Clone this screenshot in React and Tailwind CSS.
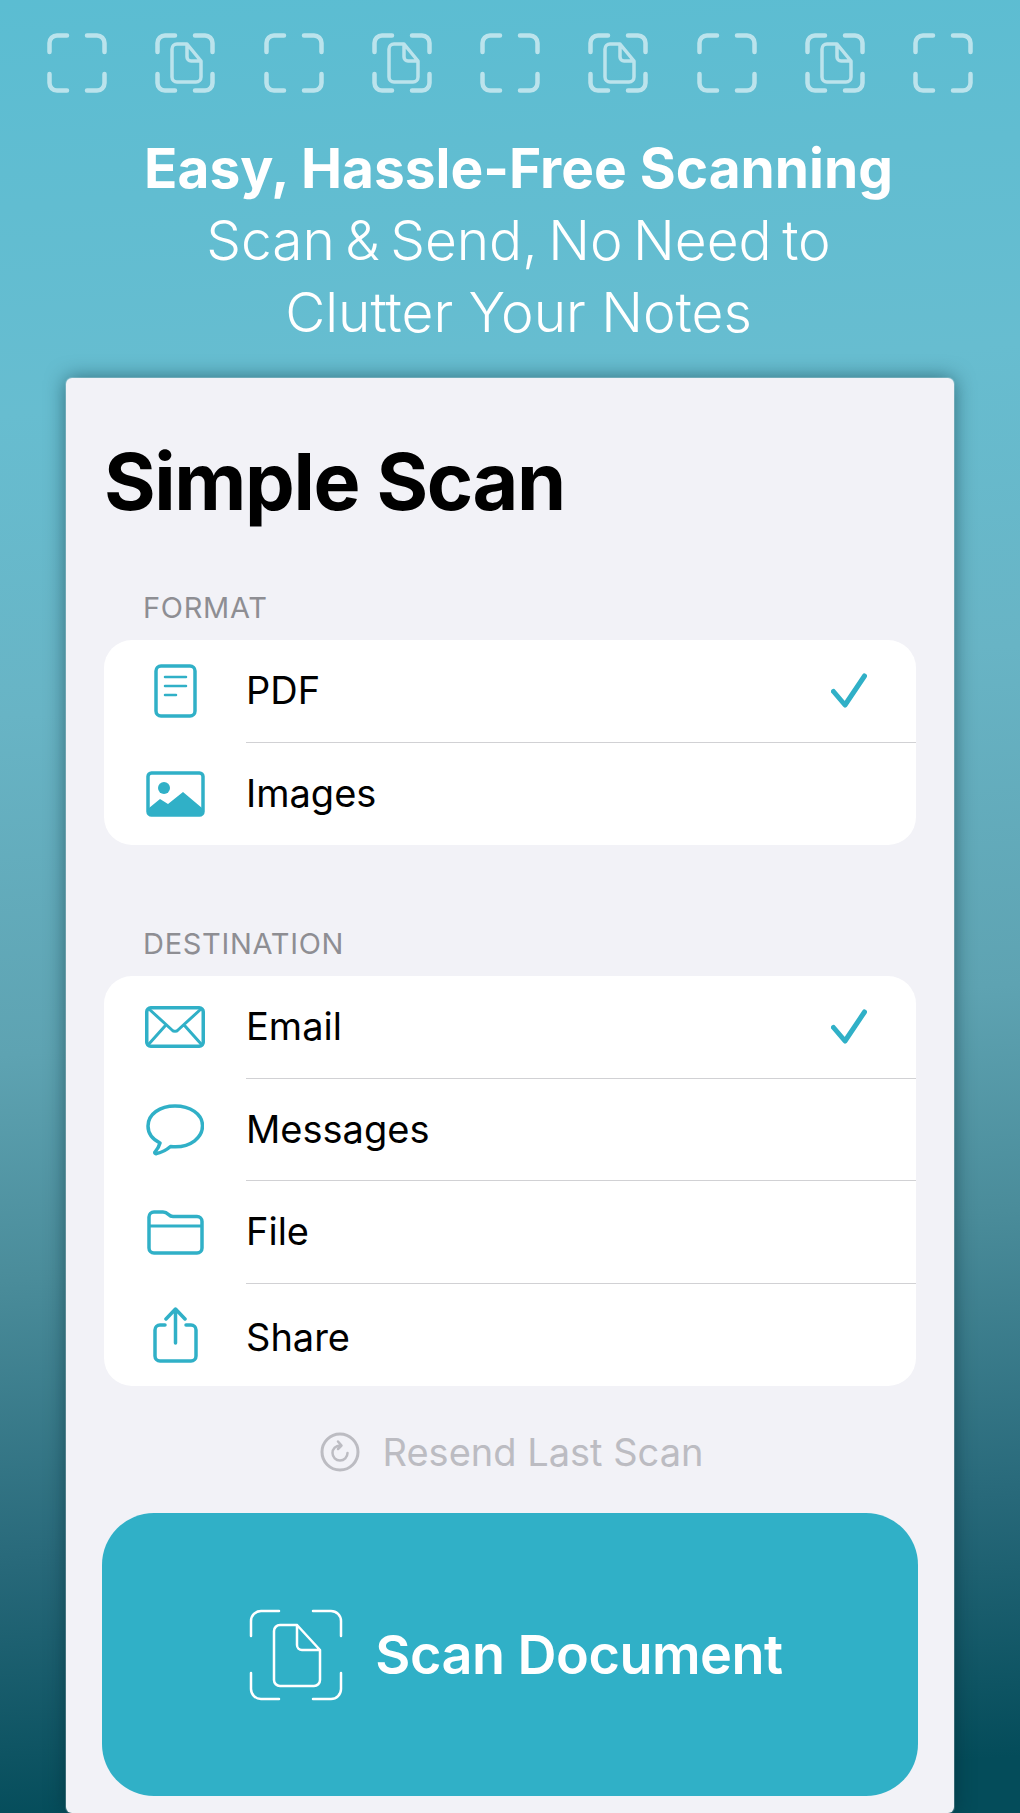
const teal = '#30b0c7'

function Frame({ file }) {
  return (
    <svg width="60" height="60" viewBox="0 0 60 60" fill="none" stroke="#fff" strokeOpacity="0.58" strokeWidth="4.500" strokeLinecap="round" strokeLinejoin="round">
      <path d="M2.500 19V10A7.500 7.500 0 0 1 10 2.500h10M40 2.500h10A7.500 7.500 0 0 1 57.500 10v9M2.500 41v9a7.500 7.500 0 0 0 7.500 7.500h10M40 57.500h10a7.500 7.500 0 0 0 7.500-7.500v-9" />
      {file && (
        <path d="M17 16a5 5 0 0 1 5-5h10l14 17v16a5 5 0 0 1-5 5H22a5 5 0 0 1-5-5zM32 11v13a4 4 0 0 0 4 4h10" strokeWidth="3.500" />
      )}
    </svg>
  )
}

function PdfIcon() {
  return (
    <svg width="43" height="54" viewBox="0 0 43 54" fill="none" stroke={teal} strokeWidth="3.500" strokeLinecap="round">
      <rect x="2" y="2" width="39" height="50" rx="5" />
      <path d="M11 13h21M11 22h21M11 31h11" strokeWidth="2.500" />
    </svg>
  )
}

function ImagesIcon() {
  return (
    <svg width="59" height="46" viewBox="0 0 59 46" fill="none">
      <rect x="2" y="2" width="55" height="42" rx="3.500" stroke={teal} strokeWidth="3.500" />
      <circle cx="18" cy="17" r="6" fill={teal} />
      <path d="M3 37l11-9 8 5 15-12 19 16v4a3 3 0 0 1-3 3H6a3 3 0 0 1-3-3z" fill={teal} />
    </svg>
  )
}

function MailIcon() {
  return (
    <svg width="60" height="42" viewBox="0 0 60 42" fill="none" stroke={teal} strokeWidth="3.500" strokeLinecap="round" strokeLinejoin="round">
      <rect x="1.750" y="1.750" width="56.500" height="38.500" rx="4" />
      <path d="M4 3l23 21a4 4 0 0 0 6 0L56 3M3 39l17-19M57 39L40 20" strokeWidth="3" />
    </svg>
  )
}

function BubbleIcon() {
  return (
    <svg width="58" height="52" viewBox="0 0 58 52" fill="none" stroke={teal} strokeWidth="3.500" strokeLinejoin="round">
      <path d="M29 2C14 2 2 10 2 22c0 7 4 13 12 17-1 4-2.500 6-5 9-.5.8 0 2 1.500 1.500 5-1 10-3.500 14-7 2 .2 3 .3 5 .3 15 0 27-9 27-21S44 2 29 2z" />
    </svg>
  )
}

function FolderIcon() {
  return (
    <svg width="57" height="45" viewBox="0 0 57 45" fill="none" stroke={teal} strokeWidth="3.500" strokeLinejoin="round">
      <path d="M2 7a5 5 0 0 1 5-5h9c3 0 4 1 5.500 2.500C23 6 24 6.500 26 6.500h24a5 5 0 0 1 5 5V38a5 5 0 0 1-5 5H7a5 5 0 0 1-5-5z" />
      <path d="M2 16h53" strokeWidth="3" />
    </svg>
  )
}

function ShareIcon() {
  return (
    <svg width="45" height="56" viewBox="0 0 45 56" fill="none" stroke={teal} strokeWidth="3.500" strokeLinecap="round" strokeLinejoin="round">
      <path d="M12 18H7a5 5 0 0 0-5 5v26a5 5 0 0 0 5 5h31a5 5 0 0 0 5-5V23a5 5 0 0 0-5-5h-5" />
      <path d="M22.500 36V3M13 12l9.500-10L32 12" />
    </svg>
  )
}

function Check() {
  return (
    <svg width="36" height="36" viewBox="0 0 36 36" fill="none" stroke={teal} strokeWidth="5" strokeLinecap="round" strokeLinejoin="round">
      <path d="M2.500 18.500L14 32 33.500 3" />
    </svg>
  )
}

function ResendIcon() {
  return (
    <svg width="40" height="40" viewBox="0 0 40 40" fill="none" stroke="#bcbcc2" strokeLinecap="round" strokeLinejoin="round">
      <circle cx="20" cy="20" r="18" strokeWidth="3" />
      <path d="M20 13.500a7.500 7.500 0 1 0 7.500 7.500M18 9.500l3.500 4-3.500 3.500" strokeWidth="2.500" />
    </svg>
  )
}

function ScanIcon() {
  return (
    <svg width="94" height="92" viewBox="0 0 94 92" fill="none" stroke="#fff" strokeWidth="2.500" strokeLinecap="round" strokeLinejoin="round">
      <path d="M2 27V12A10 10 0 0 1 12 2h18M64 2h18a10 10 0 0 1 10 10v15M2 64v16a10 10 0 0 0 10 10h18M64 90h18a10 10 0 0 0 10-10V64" />
      <path d="M25 22a6 6 0 0 1 6-6h17l23 25v30a6 6 0 0 1-6 6H31a6 6 0 0 1-6-6zM48 16v20a5 5 0 0 0 5 5h18" />
    </svg>
  )
}

function Row({ icon, label, checked, last }) {
  return (
    <div className="flex h-[102.5px] items-center">
      <div className="flex w-[142px] shrink-0 justify-center">{icon}</div>
      <div className={`flex h-full flex-1 items-center justify-between pr-[49px] ${last ? '' : 'border-b border-[#d1d1d4]'}`}>
        <span className={`text-[38px] text-black ${label === 'Share' ? 'pt-[6px]' : ''}`}>{label}</span>
        {checked && <Check />}
      </div>
    </div>
  )
}

function Section({ title, children }) {
  return (
    <div>
      <div className="pl-[39px] text-[29px] leading-[32px] tracking-[0.7px] text-[#8e8e93]">{title}</div>
      <div className="mt-[16px] overflow-hidden rounded-[28px] bg-white">{children}</div>
    </div>
  )
}

export default function App() {
  return (
    <div
      className="flex h-[1813px] w-[1020px] flex-col overflow-hidden bg-[linear-gradient(176deg,#5bbdd2_0%,#67bdd0_22%,#68b4c5_38%,#5ea3b2_56%,#4a8c9a_68%,#28697a_83%,#044c5a_97%)] pt-[33px]"
      style={{ fontFamily: 'Inter, "Liberation Sans", sans-serif' }}
    >
      <div className="flex justify-between px-[47px]">
        {[0, 1, 2, 3, 4, 5, 6, 7, 8].map((i) => (
          <Frame key={i} file={i % 2 === 1} />
        ))}
      </div>

      <div className="mt-[39px] pl-[17px] text-center text-[55px] leading-[72px] text-white">
        <div className="font-bold">Easy, Hassle-Free Scanning</div>
        <div className="font-light [word-spacing:-5px]">Scan &amp; Send, No Need to</div>
        <div className="font-light">Clutter Your Notes</div>
      </div>

      <div className="mx-[66px] mt-[30px] flex-1 rounded-[6px] bg-[#f2f2f7] px-[38px] shadow-[0_0_0_1px_rgba(255,255,255,0.2),0_0_20px_rgba(0,40,50,0.55)]">
        <h1 className="mt-[58px] text-[79px] leading-[90px] font-bold tracking-[-1.4px] text-black">Simple Scan</h1>

        <div className="mt-[66px]">
          <Section title="FORMAT">
            <Row icon={<PdfIcon />} label="PDF" checked />
            <Row icon={<ImagesIcon />} label="Images" last />
          </Section>
        </div>

        <div className="mt-[83px]">
          <Section title="DESTINATION">
            <Row icon={<MailIcon />} label="Email" checked />
            <Row icon={<BubbleIcon />} label="Messages" />
            <Row icon={<FolderIcon />} label="File" />
            <Row icon={<ShareIcon />} label="Share" last />
          </Section>
        </div>

        <div className="mt-[44px] flex items-center justify-center gap-[23px] pl-[3px]">
          <ResendIcon />
          <span className="text-[38px] leading-[44px] text-[#bcbcc2]">Resend Last Scan</span>
        </div>

        <div className="-mx-[2px] mt-[39px] flex h-[283px] items-center justify-center gap-[32px] rounded-[52px] bg-[#30b0c7] pl-[12px]">
          <ScanIcon />
          <span className="text-[54px] font-semibold tracking-[-0.5px] text-white">Scan Document</span>
        </div>
      </div>
    </div>
  )
}
